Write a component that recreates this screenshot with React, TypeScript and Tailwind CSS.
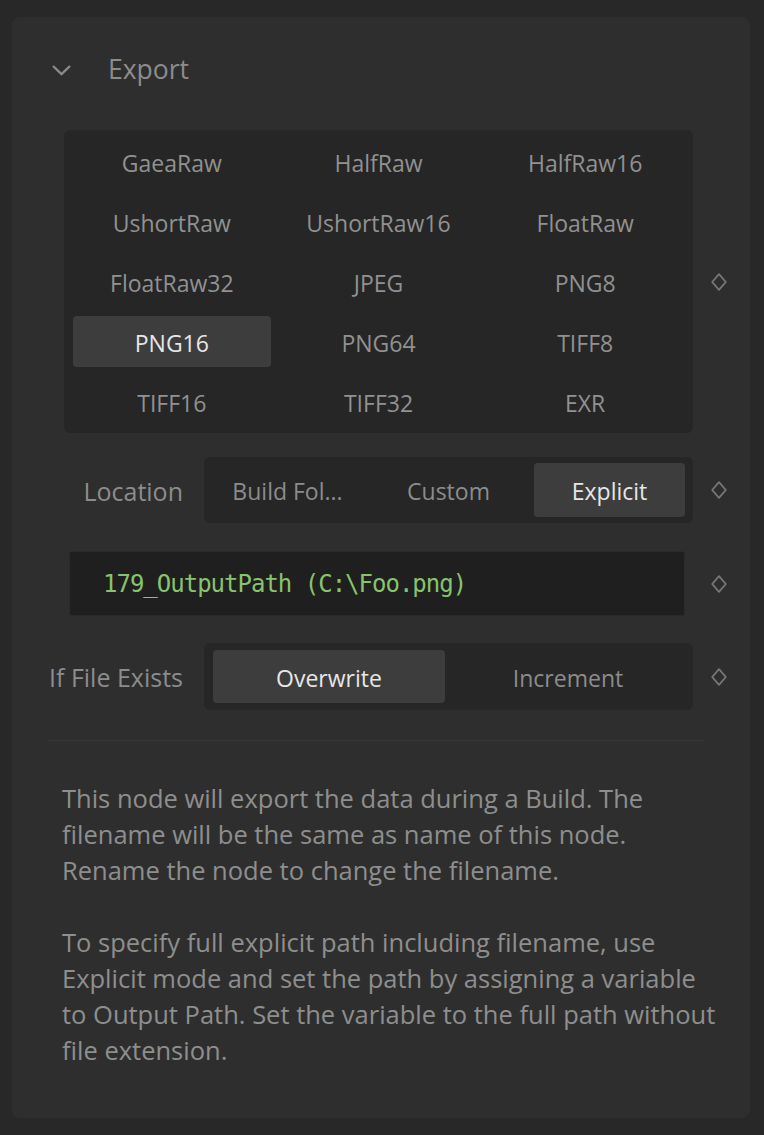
import React from "react";

const formats = [
  "GaeaRaw",
  "HalfRaw",
  "HalfRaw16",
  "UshortRaw",
  "UshortRaw16",
  "FloatRaw",
  "FloatRaw32",
  "JPEG",
  "PNG8",
  "PNG16",
  "PNG64",
  "TIFF8",
  "TIFF16",
  "TIFF32",
  "EXR",
];

function Diamond() {
  return (
    <svg width="16" height="18" viewBox="0 0 16 18" fill="none">
      <path
        d="M8 1.2 L14.8 9 L8 16.8 L1.2 9 Z"
        stroke="#777777"
        strokeWidth="1.8"
        strokeLinejoin="round"
      />
    </svg>
  );
}

function Row({ children }: { children: React.ReactNode }) {
  return (
    <div className="flex items-center">
      <div className="flex-1">{children}</div>
      <div className="flex w-[52px] justify-center">
        <Diamond />
      </div>
    </div>
  );
}

function Segmented({
  options,
  selected,
  className,
}: {
  options: string[];
  selected: string;
  className: string;
}) {
  return (
    <div className={"flex flex-1 rounded-[6px] bg-[#262626] text-[23px] " + className}>
      {options.map((o) => (
        <div
          key={o}
          className={
            "flex flex-1 items-center justify-center rounded-[4px] pt-[3px] " +
            (o === selected ? "bg-[#3d3d3d] text-[#e6e6e6]" : "text-[#8c8c8c]")
          }
        >
          {o}
        </div>
      ))}
    </div>
  );
}

export default function App() {
  return (
    <div
      className="w-full bg-[#282828] pb-[17px] pl-[12px] pr-[14px] pt-[17px]"
      style={{ fontFamily: '"Open Sans", "Noto Sans", sans-serif' }}
    >
      <div className="h-[1101px] rounded-[8px] bg-[#2e2e2e] pl-[36px] pr-[5px] pt-[18px]">
        {/* header */}
        <div className="flex h-[70px] items-center">
          <svg width="21" height="12" viewBox="0 0 21 12" fill="none" className="ml-[3px]">
            <path d="M2 2 L10.5 10 L19 2" stroke="#8a8a8a" strokeWidth="2.4" />
          </svg>
          <span className="ml-[36px] text-[26.5px] text-[#8c8c8c]">Export</span>
        </div>

        {/* format grid */}
        <div className="mt-[25px]">
          <Row>
            <div className="ml-[16px] grid grid-cols-3 gap-[9px] rounded-[6px] bg-[#262626] px-[9px] py-[6px] text-[23px]">
              {formats.map((f) => (
                <div
                  key={f}
                  className={
                    "flex h-[51px] items-center justify-center rounded-[4px] pt-[3px] " +
                    (f === "PNG16" ? "bg-[#3d3d3d] text-[#e6e6e6]" : "text-[#919191]")
                  }
                >
                  {f}
                </div>
              ))}
            </div>
          </Row>
        </div>

        {/* location */}
        <div className="mt-[24px]">
          <Row>
            <div className="flex items-center">
              <div className="w-[135px] pt-[3px] text-right text-[25px] text-[#8c8c8c]">Location</div>
              <div className="ml-[21px] flex flex-1">
                <Segmented
                  options={["Build Fol...", "Custom", "Explicit"]}
                  selected="Explicit"
                  className="h-[66px] gap-[10px] px-[8px] py-[6px]"
                />
              </div>
            </div>
          </Row>
        </div>

        {/* path input */}
        <div className="mt-[28px]">
          <Row>
            <div className="ml-[21px] mr-[8px] flex h-[65px] items-center rounded-[3px] border border-[#2a2a2a] bg-[#1f1f1f] pl-[33px]">
              <span
                className="text-[24px] tracking-[-1px] text-[#87c46c]"
                style={{ fontFamily: '"DejaVu Sans Mono", "Liberation Mono", monospace' }}
              >
                179_OutputPath (C:\Foo.png)
              </span>
            </div>
          </Row>
        </div>

        {/* if file exists */}
        <div className="mt-[27px]">
          <Row>
            <div className="flex items-center">
              <div className="w-[135px] whitespace-nowrap pt-[3px] text-right text-[25px] text-[#8c8c8c]">
                If File Exists
              </div>
              <div className="ml-[21px] flex flex-1">
                <Segmented
                  options={["Overwrite", "Increment"]}
                  selected="Overwrite"
                  className="h-[67px] gap-[7px] px-[9px] py-[7px]"
                />
              </div>
            </div>
          </Row>
        </div>

        <div className="mt-[30px] h-px w-[657px] bg-[#383838]" />

        {/* description */}
        <div className="ml-[14px] mt-[39px] text-[25.5px] leading-[36px] text-[#8e8e8e]">
          <p>
            This node will export the data during a Build. The
            <br />
            filename will be the same as name of this node.
            <br />
            Rename the node to change the filename.
          </p>
          <p className="mt-[36px]">
            To specify full explicit path including filename, use
            <br />
            Explicit mode and set the path by assigning a variable
            <br />
            to Output Path. Set the variable to the full path without
            <br />
            file extension.
          </p>
        </div>
      </div>
    </div>
  );
}
